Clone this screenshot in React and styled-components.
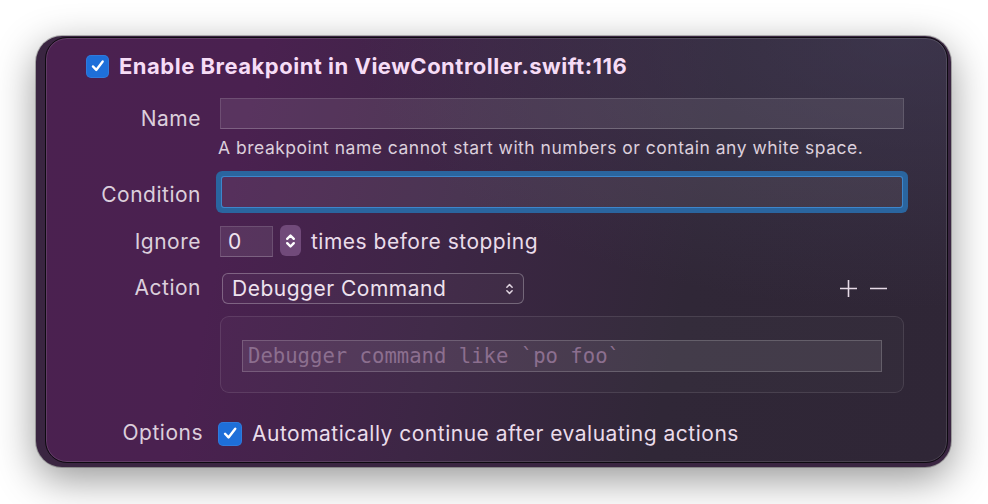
import React from "react";
import styled, { createGlobalStyle } from "styled-components";

const Global = createGlobalStyle`
  html, body { margin: 0; padding: 0; background: #ffffff; }
  body { font-family: Inter, "Noto Sans", "Liberation Sans", sans-serif; }
  * { box-sizing: border-box; }
`;

const Page = styled.div`
  min-height: 504px;
  padding: 36px 37px 37px 36px;
`;

const Frame = styled.div`
  width: 915px;
  height: 431px;
  border-radius: 26px;
  background: #3a2541;
  box-shadow: 0 12px 40px rgba(0, 0, 0, 0.42), 0 0 0 1px rgba(0, 0, 0, 0.25);
  padding: 1px 3px 4px 9px;
  display: flex;
`;

const Popover = styled.div`
  flex: 1;
  border-radius: 22px;
  border: 1px solid #0d0a10;
  box-shadow: inset 0 0 0 1px rgba(255, 255, 255, 0.12);
  background:
    radial-gradient(ellipse at 95% 0%, rgba(70, 64, 92, 0.55), rgba(70, 64, 92, 0) 45%),
    linear-gradient(102deg, #4b2150 0%, #4a2150 22%, #3d2645 45%, #302737 70%, #2f2636 100%);
  padding: 16px 43px 0 0;
  display: flex;
  flex-direction: column;
  color: #eadcea;
  overflow: hidden;
`;

const TitleRow = styled.div`
  display: flex;
  align-items: center;
  gap: 10px;
  padding-left: 40px;
  height: 24px;
`;

const Title = styled.span`
  font-weight: 700;
  font-size: 22px;
  color: #f6dcf6;
  letter-spacing: 0.5px;
  white-space: nowrap;
`;

const Row = styled.div`
  display: grid;
  grid-template-columns: 155px 1fr;
  column-gap: ${(p) => p.$gap ?? 19}px;
  align-items: center;
  margin-top: ${(p) => p.$mt}px;
`;

const Label = styled.div`
  position: relative;
  top: ${(p) => p.$shift || 0}px;
  left: ${(p) => p.$dx || 0}px;
  text-align: right;
  font-size: 21px;
  line-height: 25px;
  letter-spacing: 0.5px;
  color: #dccfdc;
  white-space: nowrap;
`;

const TextField = styled.div`
  height: 31px;
  width: ${(p) => (p.$w ? `${p.$w}px` : "auto")};
  background: rgba(255, 255, 255, 0.085);
  border: 1px solid rgba(255, 255, 255, 0.13);
  border-bottom-color: rgba(255, 255, 255, 0.22);
  font-size: 21px;
  color: #f0e4f0;
  display: flex;
  align-items: center;
  padding-left: 7px;
`;

const FocusField = styled.div`
  height: 30px;
  margin: 0 2px;
  background: rgba(255, 255, 255, 0.07);
  border-radius: 2px;
  box-shadow: 0 0 0 1px #3d86cc, 0 0 0 6px #2a659f;
`;

const Help = styled.div`
  margin: 9px 0 0 172px;
  font-size: 17.5px;
  letter-spacing: 0.5px;
  line-height: 20px;
  color: #dccfdc;
  white-space: nowrap;
`;

const Inline = styled.div`
  display: flex;
  align-items: center;
  gap: ${(p) => p.$gap || 0}px;
`;

const Stepper = styled.div`
  width: 21px;
  height: 31px;
  margin-top: -2px;
  border-radius: 6px;
  background: #714a7a;
  display: flex;
  align-items: center;
  justify-content: center;
`;

const Plain = styled.span`
  font-size: 21px;
  letter-spacing: 0.5px;
  color: #eadcea;
  margin-left: ${(p) => p.$ml || 0}px;
  white-space: nowrap;
`;

const Popup = styled.div`
  width: 302px;
  height: 31px;
  margin-left: 2px;
  border-radius: 6px;
  border: 1px solid rgba(255, 255, 255, 0.28);
  background: rgba(255, 255, 255, 0.03);
  display: flex;
  align-items: center;
  justify-content: space-between;
  padding: 0 9px 0 9px;
  font-size: 21px;
  letter-spacing: 0.5px;
  color: #eee2ee;
`;

const ActionLine = styled.div`
  display: flex;
  align-items: center;
  justify-content: space-between;
  padding-right: 16px;
`;

const PlusMinus = styled.div`
  display: flex;
  align-items: center;
  gap: 11px;
`;

const CommandBox = styled.div`
  margin: 12px 0 0 174px;
  height: 77px;
  border-radius: 9px;
  border: 1px solid rgba(255, 255, 255, 0.1);
  background: rgba(255, 255, 255, 0.025);
  padding: 23px 21px 0 21px;
`;

const CommandField = styled.div`
  height: 32px;
  background: rgba(255, 255, 255, 0.08);
  border: 1px solid rgba(255, 255, 255, 0.18);
  font-family: "DejaVu Sans Mono", "Liberation Mono", monospace;
  font-size: 20.6px;
  color: #8c6f8f;
  display: flex;
  align-items: center;
  padding-left: 5px;
  white-space: pre;
`;

const Box = styled.div`
  width: ${(p) => p.$size}px;
  height: ${(p) => p.$size}px;
  border-radius: 5px;
  background: #1e6fd9;
  box-shadow: inset 0 0 0 1px rgba(255, 255, 255, 0.08);
  display: flex;
  align-items: center;
  justify-content: center;
  flex: none;
`;

const Check = ({ size }) => (
  <Box $size={size}>
    <svg width={size * 0.68} height={size * 0.68} viewBox="0 0 16 16">
      <path d="M3 8.6 L6.4 12.2 L13 3.6" fill="none" stroke="#fff" strokeWidth="2.4" strokeLinecap="round" strokeLinejoin="round" />
    </svg>
  </Box>
);

const UpDown = ({ w = 10, h = 16, color = "#fff", sw = 2 }) => (
  <svg width={w} height={h} viewBox="0 0 10 16">
    <path d="M2 6 L5 3 L8 6" fill="none" stroke={color} strokeWidth={sw} strokeLinecap="round" strokeLinejoin="round" />
    <path d="M2 10 L5 13 L8 10" fill="none" stroke={color} strokeWidth={sw} strokeLinecap="round" strokeLinejoin="round" />
  </svg>
);

const Plus = () => (
  <svg width="19" height="19" viewBox="0 0 19 19">
    <path d="M9.5 1 V18 M1 9.5 H18" stroke="#e6dae6" strokeWidth="1.6" />
  </svg>
);

const Minus = () => (
  <svg width="19" height="19" viewBox="0 0 19 19">
    <path d="M1 9.5 H18" stroke="#e6dae6" strokeWidth="1.6" />
  </svg>
);

export default function App() {
  return (
    <Page>
      <Global />
      <Frame>
        <Popover>
          <TitleRow>
            <Check size={23} />
            <Title>Enable Breakpoint in ViewController.swift:116</Title>
          </TitleRow>

          <Row $mt={20}>
            <Label $shift={5}>Name</Label>
            <TextField />
          </Row>
          <Help>A breakpoint name cannot start with numbers or contain any white space.</Help>

          <Row $mt={19}>
            <Label $shift={2}>Condition</Label>
            <FocusField />
          </Row>

          <Row $mt={19}>
            <Label>Ignore</Label>
            <Inline $gap={7}>
              <TextField $w={53}>0</TextField>
              <Stepper>
                <UpDown w={11} h={20} sw={2.2} />
              </Stepper>
              <Plain $ml={3}>times before stopping</Plain>
            </Inline>
          </Row>

          <Row $mt={16}>
            <Label $shift={-1}>Action</Label>
            <ActionLine>
              <Popup>
                Debugger Command
                <UpDown w={9} h={14} color="#e0d4e0" sw={1.7} />
              </Popup>
              <PlusMinus>
                <Plus />
                <Minus />
              </PlusMinus>
            </ActionLine>
          </Row>

          <CommandBox>
            <CommandField>Debugger command like `po foo`</CommandField>
          </CommandBox>

          <Row $mt={28} $gap={17}>
            <Label $dx={2} $shift={-1}>Options</Label>
            <Inline $gap={10}>
              <Check size={24} />
              <Plain>Automatically continue after evaluating actions</Plain>
            </Inline>
          </Row>
        </Popover>
      </Frame>
    </Page>
  );
}
